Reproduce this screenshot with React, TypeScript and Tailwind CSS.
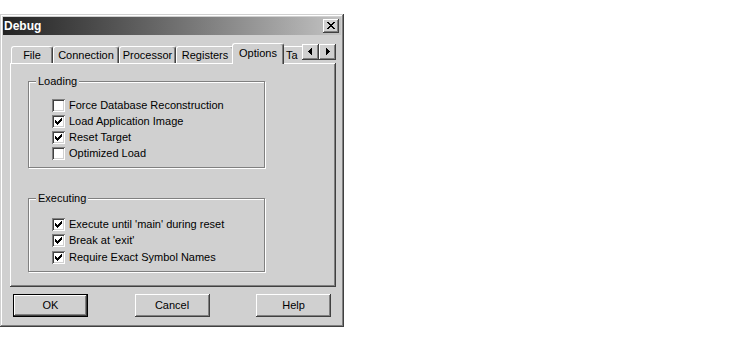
const loading = [
  { label: "Force Database Reconstruction", checked: false },
  { label: "Load Application Image", checked: true },
  { label: "Reset Target", checked: true },
  { label: "Optimized Load", checked: false },
];

const executing = [
  { label: "Execute until 'main' during reset", checked: true },
  { label: "Break at 'exit'", checked: true },
  { label: "Require Exact Symbol Names", checked: true },
];

const tabs = [
  { label: "File", w: "w-[42px]" },
  { label: "Connection", w: "w-[66px]" },
  { label: "Processor", w: "w-[57px]" },
  { label: "Registers", w: "w-[58px]" },
];

function Checkbox({ checked }: { checked: boolean }) {
  return (
    <div className="w-[13px] h-[13px] shrink-0 bg-white shadow-[inset_1px_1px_#808080,inset_-1px_-1px_#fff,inset_2px_2px_#404040,inset_-2px_-2px_#d0d0d0]">
      {checked && (
        <svg width="13" height="13" viewBox="0 0 13 13" shapeRendering="crispEdges">
          <path
            d="M9 3h1v1h-1zM8 4h2v1h-2zM3 5h1v1h-1zM7 5h3v1h-3zM3 6h2v1h-2zM6 6h3v1h-3zM3 7h5v1h-5zM4 8h3v1h-3zM5 9h1v1h-1z"
            fill="#000"
          />
        </svg>
      )}
    </div>
  );
}

function Row({ label, checked }: { label: string; checked: boolean }) {
  return (
    <div className="flex items-center h-[13px] gap-[4px]">
      <Checkbox checked={checked} />
      <span className="leading-[13px] whitespace-nowrap">{label}</span>
    </div>
  );
}

function Button({ label, isDefault }: { label: string; isDefault?: boolean }) {
  return (
    <div
      className={
        isDefault
          ? "w-[75px] h-[23px] flex items-center justify-center border border-black shadow-[inset_-1px_-1px_#404040,inset_1px_1px_#fff,inset_-2px_-2px_#808080]"
          : "w-[75px] h-[23px] flex items-center justify-center shadow-[inset_-1px_-1px_#404040,inset_1px_1px_#fff,inset_-2px_-2px_#808080,inset_2px_2px_#d0d0d0]"
      }
    >
      {label}
    </div>
  );
}

export default function App() {
  return (
    <div className="w-[750px] h-[340px] bg-white pt-[14px] font-['Liberation_Sans',Arial,sans-serif] text-[11px] text-black">
      <div className="w-[344px] h-[313px] bg-[#d0d0d0] p-[3px] flex flex-col shadow-[inset_-1px_-1px_#404040,inset_1px_1px_#d0d0d0,inset_-2px_-2px_#808080,inset_2px_2px_#fff]">
        {/* title bar */}
        <div className="h-[18px] flex items-center justify-between pl-[1px] pr-[2px] bg-gradient-to-r from-[#242424] to-[#c3c3c3]">
          <span className="text-white font-bold text-[12px] leading-[14px]">Debug</span>
          <div className="w-[16px] h-[14px] bg-[#d0d0d0] shadow-[inset_-1px_-1px_#404040,inset_1px_1px_#fff,inset_-2px_-2px_#808080]">
            <svg width="16" height="14" viewBox="0 0 16 14" shapeRendering="crispEdges">
              <path
                d="M4 3h2v1h-2zM10 3h2v1h-2zM5 4h2v1h-2zM9 4h2v1h-2zM6 5h4v1h-4zM7 6h2v1h-2zM6 7h4v1h-4zM5 8h2v1h-2zM9 8h2v1h-2zM4 9h2v1h-2zM10 9h2v1h-2z"
                fill="#000"
              />
            </svg>
          </div>
        </div>

        <div className="pl-[7px] pt-[8px]">
          {/* tab strip */}
          <div className="relative w-[326px] h-[20px] flex items-end pl-[1px]">
            {tabs.map((t) => (
              <div
                key={t.label}
                className={`${t.w} h-[17px] flex items-center justify-center border-t border-l border-white border-r border-r-[#404040] rounded-t-[3px] shadow-[inset_-1px_0_#808080]`}
              >
                <span className="leading-[13px]">{t.label}</span>
              </div>
            ))}
            <div className="relative z-10 w-[52px] -mx-[2px] h-[21px] -mb-[1px] bg-[#d0d0d0] flex justify-center pt-[3px] border-t border-l border-white border-r border-r-[#404040] rounded-t-[3px] shadow-[inset_-1px_0_#808080]">
              <span className="leading-[13px]">Options</span>
            </div>
            <div className="w-[54px] h-[17px] flex items-center pl-[3px] border-t border-l border-white rounded-tl-[3px]">
              <span className="leading-[13px]">Ta</span>
            </div>
            {/* scroll arrows */}
            <div className="absolute right-0 top-[1px] flex z-20">
              <div className="w-[17px] h-[16px] bg-[#d0d0d0] shadow-[inset_-1px_-1px_#404040,inset_1px_1px_#fff,inset_-2px_-2px_#808080]">
                <svg width="17" height="16" viewBox="0 0 17 16" shapeRendering="crispEdges">
                  <path d="M6 7h1v1h-1zM7 6h1v3h-1zM8 5h1v5h-1zM9 4h1v7h-1z" fill="#000" />
                </svg>
              </div>
              <div className="w-[17px] h-[16px] bg-[#d0d0d0] shadow-[inset_-1px_-1px_#404040,inset_1px_1px_#fff,inset_-2px_-2px_#808080]">
                <svg width="17" height="16" viewBox="0 0 17 16" shapeRendering="crispEdges">
                  <path d="M7 4h1v7h-1zM8 5h1v5h-1zM9 6h1v3h-1zM10 7h1v1h-1z" fill="#000" />
                </svg>
              </div>
            </div>
          </div>

          {/* panel */}
          <div className="w-[326px] h-[224px] pl-[18px] pt-[18px] shadow-[inset_-1px_-1px_#404040,inset_1px_1px_#fff,inset_-2px_-2px_#808080]">
            <div className="relative w-[237px] border border-[#808080] shadow-[inset_1px_1px_#fff,1px_1px_#fff] pl-[23px] pt-[17px] pb-[7px]">
              <span className="absolute left-[7px] -top-[7px] px-[2px] bg-[#d0d0d0] leading-[13px]">Loading</span>
              <div className="flex flex-col gap-[3px]">
                {loading.map((r) => (
                  <Row key={r.label} label={r.label} checked={r.checked} />
                ))}
              </div>
            </div>

            <div className="relative mt-[30px] w-[237px] border border-[#808080] shadow-[inset_1px_1px_#fff,1px_1px_#fff] pl-[23px] pt-[19px] pb-[7px]">
              <span className="absolute left-[7px] -top-[7px] px-[2px] bg-[#d0d0d0] leading-[13px]">Executing</span>
              <div className="flex flex-col">
                <Row label={executing[0].label} checked={executing[0].checked} />
                <div className="mt-[3px]">
                  <Row label={executing[1].label} checked={executing[1].checked} />
                </div>
                <div className="mt-[4px]">
                  <Row label={executing[2].label} checked={executing[2].checked} />
                </div>
              </div>
            </div>
          </div>
        </div>

        {/* buttons */}
        <div className="flex justify-between px-[10px] pt-[7px]">
          <Button label="OK" isDefault />
          <Button label="Cancel" />
          <Button label="Help" />
        </div>
      </div>
    </div>
  );
}
